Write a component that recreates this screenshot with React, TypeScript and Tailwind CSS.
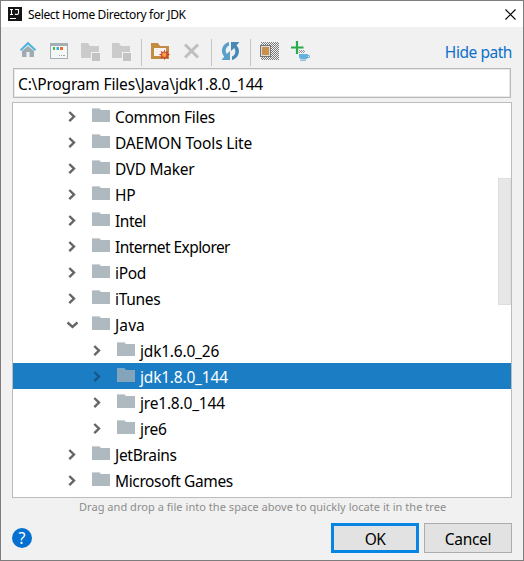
import React from "react";

type Row = { name: string; level?: 1; open?: boolean; selected?: boolean; track: string };

const rows: Row[] = [
  { name: "Common Files", track: "tracking-[-0.3px]" },
  { name: "DAEMON Tools Lite", track: "tracking-[-0.15px]" },
  { name: "DVD Maker", track: "tracking-[-0.3px]" },
  { name: "HP", track: "tracking-[-0.3px]" },
  { name: "Intel", track: "tracking-[-0.45px]" },
  { name: "Internet Explorer", track: "tracking-[-0.56px]" },
  { name: "iPod", track: "tracking-[-0.3px]" },
  { name: "iTunes", track: "tracking-[-0.3px]" },
  { name: "Java", open: true, track: "tracking-[0.1px]" },
  { name: "jdk1.6.0_26", level: 1, track: "tracking-[-0.2px]" },
  { name: "jdk1.8.0_144", level: 1, selected: true, track: "tracking-[-0.2px]" },
  { name: "jre1.8.0_144", level: 1, track: "tracking-[-0.2px]" },
  { name: "jre6", level: 1, track: "tracking-[-0.3px]" },
  { name: "JetBrains", track: "tracking-[-0.3px]" },
  { name: "Microsoft Games", track: "tracking-[-0.37px]" },
];

function Icon({ className = "", children }: { className?: string; children: React.ReactNode }) {
  return (
    <svg className={`h-5 w-5 shrink-0 ${className}`} viewBox="0 0 20 20" fill="none">
      {children}
    </svg>
  );
}

function Separator({ className = "" }: { className?: string }) {
  return <div className={`h-[27px] w-px shrink-0 bg-[#c6c6c6] ${className}`} />;
}

function HomeIcon() {
  return (
    <Icon className="ml-[19px]">
      <path d="M2 10 8 5l6 5v6h-4.500v-5h-3v5H2z" fill="#9fabb2" />
      <path d="M.5 9.300 8 2.200l7.500 7.100" stroke="#4bb4dc" strokeWidth="2" />
    </Icon>
  );
}

function WindowIcon() {
  return (
    <Icon className="ml-[10px]">
      <path d="M0 2h18v16H0z" fill="#a3afb6" />
      <path d="M1 5h16v12H1z" fill="#f5f6f6" />
      <path d="M3 6h2v3H3z" fill="#57b847" />
      <path d="M6.500 6H9v3H6.500z" fill="#38aee0" />
      <path d="M10 6h3v3h-3z" fill="#f26a2e" />
      <path d="M9 14h1v1H9zM11 14h1v1h-1zM13 14h2v1h-2z" fill="#9aa5aa" />
    </Icon>
  );
}

function JumpFolderIcon({ className }: { className: string }) {
  return (
    <Icon className={className}>
      <path d="M0 2h7l2 3h9v12H0z" fill="#cbcbcb" />
      <path d="M10 11h10v9H10z" fill="#f1f1f1" />
      <path d="M11 12h8v8h-8z" fill="#c3c3c3" />
    </Icon>
  );
}

function NewFolderIcon() {
  return (
    <Icon className="ml-[9px]">
      <path d="M0 2h7l2 3h9v13H0z" fill="#c28d43" />
      <path d="M3 7h12v8H3z" fill="#f7f4ef" />
      <path d="m13.500 8.500 1.100 2.700 2.700-1.500-.8 2.800 2.700 1.200-2.700 1.100.8 2.900-2.700-1.300-1.100 2.800-1.200-2.800-2.700 1.300.9-2.900-2.700-1.100 2.700-1.200-.9-2.800 2.700 1.500z" fill="#c94334" />
      <circle cx="13.300" cy="13.800" r="2.200" fill="#f5a13c" />
    </Icon>
  );
}

function SyncIcon() {
  return (
    <Icon className="ml-[9px]">
      <path d="M3.300 15.500C-1.500 10.500 1.600 2.500 8 1v3.400C4.500 6 3.800 10 5.700 12.900L9 10v9H.6z" fill="#5a9fc9" />
      <path d="M15.500 4.500C20.500 9.500 17.400 17.500 11 19v-3.400c3.500-1.600 4.200-5.600 2.300-8.500L10 10V1h8.400z" fill="#4789b4" />
    </Icon>
  );
}

function HiddenFilesIcon() {
  return (
    <Icon className="ml-[9px]">
      <defs>
        <pattern id="checks" width="2" height="2" patternUnits="userSpaceOnUse">
          <path d="M0 0h2v2H0z" fill="#f1f1f1" />
          <path d="M0 0h1v1H0zM1 1h1v1H1z" fill="#7a7a7a" />
        </pattern>
      </defs>
      <path d="M1 1h18v18H1z" fill="url(#checks)" />
      <path d="M0 4h11v12H0z" fill="#747474" />
      <path d="M1 5h9v10H1z" fill="#dcdcdc" />
      <path d="M2 6h7v8H2z" fill="#c9914a" />
    </Icon>
  );
}

function AddJdkIcon() {
  return (
    <Icon className="ml-[11px]">
      <path d="M6 0v13M0 6.500h12.500" stroke="#28aa4c" strokeWidth="2.200" />
      <path d="M8 9h1v1H8zM10 9h1v1h-1zM12 9h1v1h-1zM9 10h1v1H9zM11 10h1v1h-1zM13 10h1v1h-1zM8 11h1v1H8zM10 11h1v1h-1zM12 11h1v1h-1z" fill="#959595" />
      <path d="M8 13h9v2.500c0 1.700-1.300 3-3 3h-3c-1.700 0-3-1.300-3-3z" fill="#66b2df" />
      <path d="M16 14.500h2.300v2H16" stroke="#66b2df" strokeWidth="1" />
      <path d="M9 19.500h6" stroke="#9bbdd0" />
    </Icon>
  );
}

function TreeRow({ row }: { row: Row }) {
  return (
    <div className={`flex h-[26px] items-start ${row.selected ? "bg-[#1b7dc4] text-white" : "text-black"} ${row.level ? "pl-[78px]" : "pl-[53px]"}`}>
      <svg className={`mt-[7px] h-[13px] w-3 shrink-0 ${row.selected ? "text-[#175889]" : "text-[#666]"}`} viewBox="0 0 12 13" fill="none">
        <path d={row.open ? "m1.500 4.500 5 4.500 5-4.500" : "m3.300 2 4.700 4.600-4.700 4.600"} stroke="currentColor" strokeWidth="2.400" />
      </svg>
      <svg className="mt-[5px] ml-[14px] h-[14px] w-[18px] shrink-0" viewBox="0 0 18 14">
        <path d="M0 0h7l2 2h9v12H0z" fill={row.selected ? "#84a4bb" : "#aeb9c0"} />
        <path d="M0 0h7l1 1H0z" fill={row.selected ? "#75a7cc" : "#ccd4d8"} />
      </svg>
      <span className={`ml-[5px] whitespace-pre leading-[29px] ${row.track}`}>{row.name}</span>
    </div>
  );
}

export default function App() {
  return (
    <div className="flex h-[561px] w-[524px] flex-col overflow-hidden border border-[#7d7d7d] bg-[#f1f1f1] font-['Noto_Sans','Open_Sans',sans-serif] text-[15.500px] text-black">
      <div className="flex h-[26px] shrink-0 items-start bg-white pl-[7px]">
        <svg className="mt-[6px] h-[14px] w-[14px]" viewBox="0 0 14 14">
          <path d="M0 0h14v14H0z" fill="#141414" />
          <path d="M2 2.500h3M3.500 2.500v5M2 7.500h3M7 2.500h3.500V6c0 1.500-2 2-3.500 1M2 11.500h6" stroke="#fff" strokeWidth="1.100" fill="none" />
        </svg>
        <span className="ml-[6px] whitespace-pre text-[12px] leading-[28px] tracking-[-0.34px]">Select Home Directory for JDK</span>
        <svg className="mt-2 mr-[7px] ml-auto h-[11px] w-[11px]" viewBox="0 0 11 11">
          <path d="m.5.5 10 10m0-10-10 10" stroke="#000" strokeWidth="1.200" />
        </svg>
      </div>

      <div className="flex h-[41px] shrink-0 items-start pt-[14px]">
        <HomeIcon />
        <WindowIcon />
        <JumpFolderIcon className="ml-[11px]" />
        <JumpFolderIcon className="ml-[11px]" />
        <Separator className="-mt-[2px] ml-[9px]" />
        <NewFolderIcon />
        <Icon className="ml-[12px]">
          <path d="m2 3.500 13 13m0-13-13 13" stroke="#bfbfbf" strokeWidth="3" />
        </Icon>
        <Separator className="-mt-[2px] ml-[8px]" />
        <SyncIcon />
        <Separator className="-mt-[2px] ml-[9px]" />
        <HiddenFilesIcon />
        <AddJdkIcon />
        <span className="mr-[11px] ml-auto whitespace-pre leading-[23px] tracking-[-0.45px] text-[#0b70c9]">Hide path</span>
      </div>

      <div className="ml-3 flex h-[30px] w-[498px] shrink-0 border border-[#b9b9b9] bg-white">
        <div className="flex w-full border border-[#e9e9e9] pl-[3px]">
          <span className="whitespace-pre leading-[29px] tracking-[-0.17px]">C:\Program Files\Java\jdk1.8.0_144</span>
        </div>
      </div>

      <div className="relative mt-1 ml-[11px] h-[396px] w-[500px] shrink-0 border border-[#bcbcbc] bg-white">
        {rows.map((row) => (
          <TreeRow key={row.name} row={row} />
        ))}
        <div className="absolute top-[75px] right-0 h-[127px] w-[13px] border border-[#dedede] bg-[#e7e7e7]" />
      </div>

      <div className="ml-[78px] h-[25px] shrink-0 whitespace-pre text-[11px] leading-[17px] tracking-[0.04px] text-[#8d8d8d]">
        Drag and drop a file into the space above to quickly locate it in the tree
      </div>

      <div className="flex shrink-0 items-start pl-[11px]">
        <div className="mt-[5px] h-5 w-5 rounded-full bg-[#0471d1] text-center text-[16px] leading-[20px] text-white">?</div>
        <div className="ml-[299px] h-[30px] w-[88px] border-3 border-[#0785e2] bg-[#e2e2e2] text-center leading-[27px] tracking-[-0.5px]">OK</div>
        <div className="ml-[5px] h-[30px] w-[88px] border border-[#adadad] bg-[#e2e2e2] text-center leading-[31px] tracking-[-0.3px]">Cancel</div>
      </div>
    </div>
  );
}
